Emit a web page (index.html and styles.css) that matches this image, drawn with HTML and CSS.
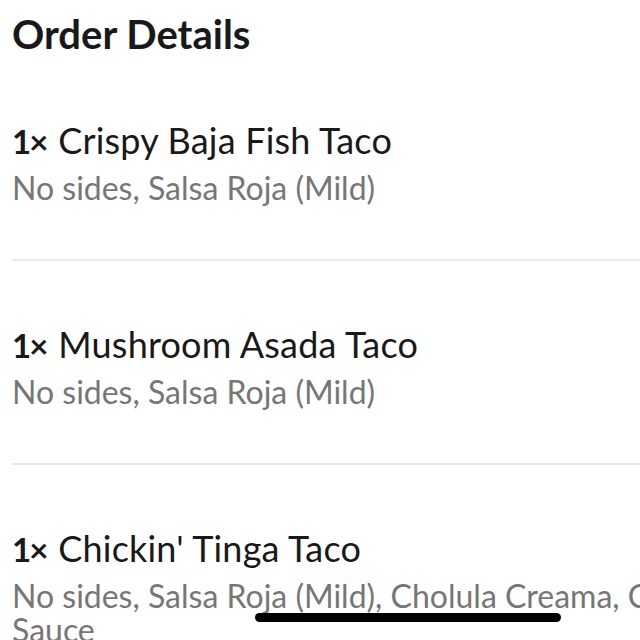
FILE: index.html
```html
<!DOCTYPE html>
<html>
<head>
<meta charset="utf-8">
<link rel="stylesheet" href="styles.css">
</head>
<body>
<main class="page">
  <h1 class="title">Order Details</h1>
  <ul class="items">
    <li class="item">
      <div class="name"><span class="qty">1×</span>Crispy Baja Fish Taco</div>
      <div class="opts">No sides, Salsa Roja (Mild)</div>
    </li>
    <li class="item">
      <div class="name"><span class="qty">1×</span>Mushroom Asada Taco</div>
      <div class="opts">No sides, Salsa Roja (Mild)</div>
    </li>
    <li class="item">
      <div class="name"><span class="qty">1×</span>Chickin' Tinga Taco</div>
      <div class="opts">No sides, Salsa Roja (Mild), Cholula Creama, Cholula Sauce</div>
    </li>
  </ul>
</main>
<div class="home-indicator"></div>
</body>
</html>
```
FILE: styles.css
```css
html, body {
  margin: 0;
  padding: 0;
  background: #fff;
  overflow: hidden;
  height: 640px;
}
body {
  font-family: Lato, "Noto Sans", sans-serif;
  color: #191919;
}
.page {
  padding: 14px 0 0 12px;
  width: 740px;
}
.title {
  margin: 0;
  font-size: 40px;
  font-weight: 700;
  line-height: 40px;
}
.items {
  list-style: none;
  margin: 0;
  padding: 0;
}
.item {
  padding: 63px 0 54px;
  border-bottom: 2px solid #e8e8e8;
}
.item:first-child {
  padding-top: 66px;
}
.name {
  font-size: 36px;
  line-height: 40px;
  letter-spacing: 0.2px;
}
.qty {
  display: inline-block;
  font-weight: 700;
  font-size: 33px;
  letter-spacing: -2px;
  margin-right: 12px;
}
.opts {
  margin-top: 10px;
  font-size: 32px;
  line-height: 34px;
  color: #767676;
}
.home-indicator {
  position: fixed;
  left: 255px;
  top: 613px;
  width: 306px;
  height: 9px;
  border-radius: 5px;
  background: #000;
}
```
